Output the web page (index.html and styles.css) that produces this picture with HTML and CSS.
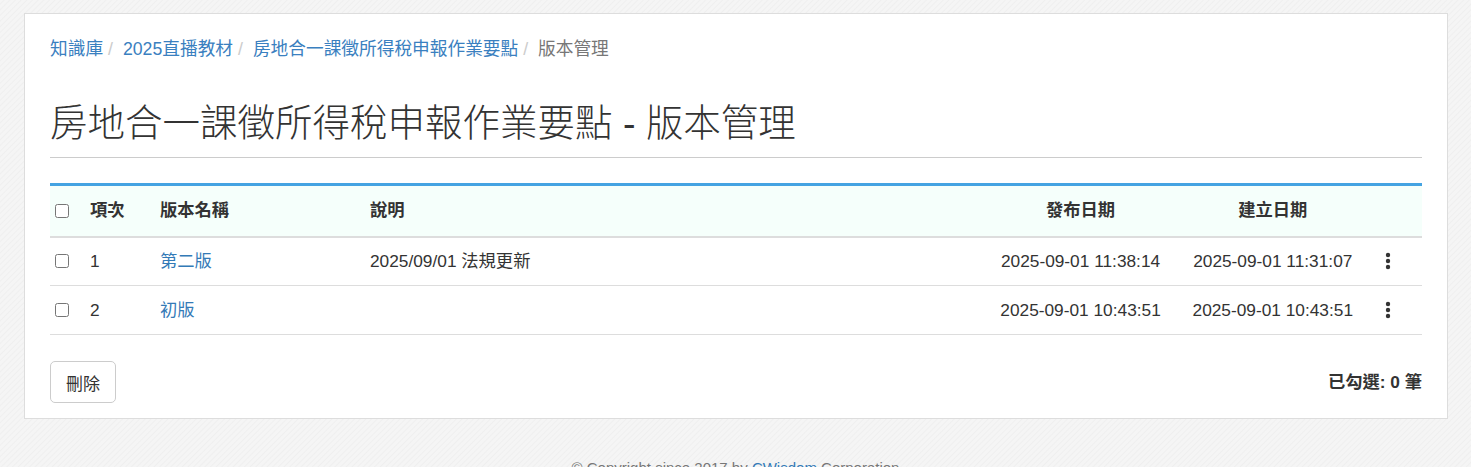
FILE: index.html
```html
<!DOCTYPE html>
<html lang="zh-Hant">
<head>
    <meta charset="UTF-8">
    <title>版本管理</title>
    <link rel="stylesheet" href="styles.css">
</head>
<body>
    <div class="panel">
        <ol class="breadcrumb">
            <li><a href="#">知識庫</a></li>
            <li><a href="#">2025直播教材</a></li>
            <li><a href="#">房地合一課徵所得稅申報作業要點</a></li>
            <li class="active">版本管理</li>
        </ol>

        <h2 class="page-title">房地合一課徵所得稅申報作業要點 - 版本管理</h2>

        <table class="version-table">
            <thead>
                <tr>
                    <th class="col-check"><input type="checkbox"></th>
                    <th class="col-no">項次</th>
                    <th class="col-name">版本名稱</th>
                    <th class="col-desc">說明</th>
                    <th class="col-date1">發布日期</th>
                    <th class="col-date2">建立日期</th>
                    <th class="col-menu"></th>
                </tr>
            </thead>
            <tbody>
                <tr>
                    <td class="col-check"><input type="checkbox"></td>
                    <td>1</td>
                    <td><a href="#">第二版</a></td>
                    <td>2025/09/01 法規更新</td>
                    <td class="center">2025-09-01 11:38:14</td>
                    <td class="center">2025-09-01 11:31:07</td>
                    <td class="col-menu">
                        <svg class="kebab" width="6" height="18" viewBox="0 0 6 18"><circle cx="3" cy="3" r="2.2"/><circle cx="3" cy="9" r="2.2"/><circle cx="3" cy="15" r="2.2"/></svg>
                    </td>
                </tr>
                <tr>
                    <td class="col-check"><input type="checkbox"></td>
                    <td>2</td>
                    <td><a href="#">初版</a></td>
                    <td></td>
                    <td class="center">2025-09-01 10:43:51</td>
                    <td class="center">2025-09-01 10:43:51</td>
                    <td class="col-menu">
                        <svg class="kebab" width="6" height="18" viewBox="0 0 6 18"><circle cx="3" cy="3" r="2.2"/><circle cx="3" cy="9" r="2.2"/><circle cx="3" cy="15" r="2.2"/></svg>
                    </td>
                </tr>
            </tbody>
        </table>

        <div class="table-footer">
            <button class="btn">刪除</button>
            <span class="selected-count">已勾選: 0 筆</span>
        </div>
    </div>

    <footer class="site-footer">
        © Copyright since 2017 by <a href="#">CWisdom</a> Corporation
    </footer>
</body>
</html>
```

FILE: styles.css
```css
* {
    box-sizing: border-box;
}

body {
    margin: 0;
    font-family: 'Liberation Sans', Arial, 'Noto Sans CJK TC', sans-serif;
    font-size: 17.3px;
    line-height: 1.42857;
    color: #333;
    background-color: #f3f3f3;
    background-image: repeating-linear-gradient(135deg, #f5f5f5 0px, #f5f5f5 2px, #efefef 3px, #f5f5f5 4px);
}

a {
    color: #337ab7;
    text-decoration: none;
}

.panel {
    margin: 13px 23px 0 24px;
    background: #fff;
    border: 1px solid #ddd;
    padding: 23px 25px 15px 25px;
}

/* breadcrumb */
.breadcrumb {
    list-style: none;
    margin: 0;
    padding: 0;
    display: flex;
    line-height: 24px;
    font-size: 17.7px;
}

.breadcrumb li + li::before {
    content: "/\00a0";
    color: #ccc;
    padding: 0 5px;
}

.breadcrumb a {
    color: #3a80c0;
}

.breadcrumb .active {
    color: #777;
}

.page-title {
    margin: 42px 0 0;
    padding-bottom: 13px;
    border-bottom: 1px solid #ccc;
    font-size: 37.5px;
    font-weight: 300;
    line-height: 41px;
    color: #333;
}

/* table */
.version-table {
    width: 100%;
    margin-top: 25px;
    border-collapse: collapse;
    border-top: 3px solid #44a3e2;
}

.version-table th,
.version-table td {
    padding: 0 10px;
    text-align: left;
    vertical-align: middle;
    white-space: nowrap;
}

.version-table thead th {
    height: 52px;
    background: #f5fffb;
    font-weight: bold;
    border-bottom: 2px solid #ddd;
}

.version-table tbody td {
    height: 49px;
    border-bottom: 1px solid #ddd;
}

.version-table input[type="checkbox"] {
    width: 14px;
    height: 14px;
    margin: 0;
    display: block;
}

.version-table .col-check {
    width: 30px;
    padding-left: 5px;
    padding-right: 0;
}

.col-no { width: 70px; }
.col-name { width: 210px; }
.version-table .col-date1 { width: 204px; text-align: center; }
.version-table .col-date2 { width: 180px; text-align: center; }
.version-table .col-menu { width: 59px; padding-left: 22px; }

.version-table td.center {
    text-align: center;
}

.kebab {
    display: block;
    fill: #333;
}

/* footer of panel */
.table-footer {
    margin-top: 26px;
    display: flex;
    justify-content: space-between;
    align-items: center;
}

.btn {
    height: 42px;
    padding: 0 15px;
    font-family: inherit;
    font-size: 17px;
    color: #333;
    background: #fff;
    border: 1px solid #ccc;
    border-radius: 5px;
}

.selected-count {
    font-weight: bold;
}

.site-footer {
    text-align: center;
    font-size: 15px;
    color: #777;
    margin-top: 38px;
    padding-bottom: 20px;
}

.site-footer a {
    color: #337ab7;
}
```
